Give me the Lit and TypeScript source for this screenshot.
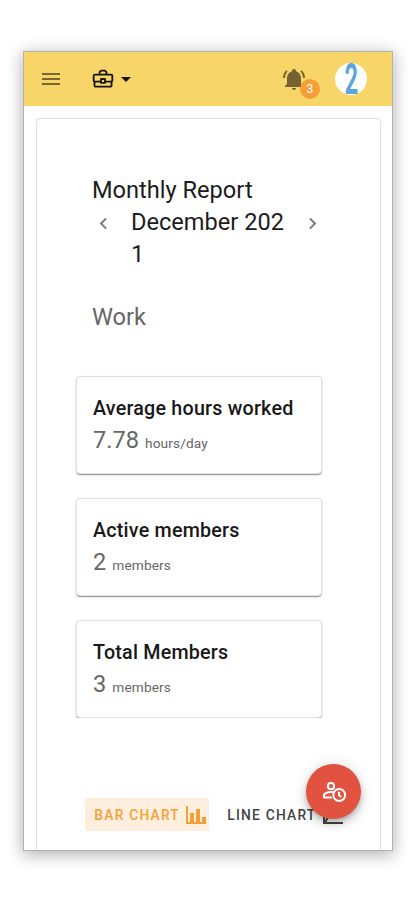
import { LitElement, html, css, svg } from "lit";
import { customElement, property } from "lit/decorators.js";

const PATHS: Record<string, string> = {
  menu: "M3,6H21V8H3V6M3,11H21V13H3V11M3,16H21V18H3V16Z",
  down: "M7,10L12,15L17,10H7Z",
  bell: "M21,19V20H3V19L5,17V11C5,7.9 7.03,5.17 10,4.29C10,4.19 10,4.1 10,4A2,2 0 0,1 12,2A2,2 0 0,1 14,4C14,4.1 14,4.19 14,4.29C16.97,5.17 19,7.9 19,11V17L21,19M14,21A2,2 0 0,1 12,23A2,2 0 0,1 10,21M19.75,3.19L18.33,4.61C20.04,6.3 21,8.6 21,11H23C23,8.07 21.84,5.25 19.75,3.19M1,11H3C3,8.6 3.96,6.3 5.67,4.61L4.25,3.19C2.16,5.25 1,8.07 1,11Z",
  left: "M15.41,16.58L10.83,12L15.41,7.41L14,6L8,12L14,18L15.41,16.58Z",
  right: "M8.59,16.58L13.17,12L8.59,7.41L10,6L16,12L10,18L8.59,16.58Z",
  bars: "M22,21H2V3H4V19H6V10H10V19H12V6H16V19H18V14H22V21Z",
  line: "M16,11.78L20.24,4.45L21.97,5.45L16.74,14.5L10.23,10.75L5.46,19H22V21H2V3H4V17.54L9.5,8L16,11.78Z",
};

@customElement("ui-icon")
export class UiIcon extends LitElement {
  @property() name = "";
  static styles = css`
    :host { display: block; width: 24px; height: 24px; flex: none; }
    svg { display: block; width: 100%; height: 100%; fill: currentColor; }
    .outline { fill: none; stroke: currentColor; stroke-width: 2; stroke-linejoin: round; }
  `;
  render() {
    if (this.name === "briefcase") {
      return html`<svg viewBox="0 0 24 24">${svg`<g class="outline">
        <path d="M8.3 7V4.4L9.9 2.8H14.1L15.7 4.4V7M3.2 7.2H20.8A1.4 1.4 0 0 1 22.2 8.6V13.4A1.4 1.4 0 0 1 20.8 14.8H14.4M9.6 14.8H3.2A1.4 1.4 0 0 1 1.8 13.4V8.6A1.4 1.4 0 0 1 3.2 7.2M2.7 15V19.2A1.2 1.2 0 0 0 3.9 20.4H20.1A1.2 1.2 0 0 0 21.3 19.2V15M9.8 12H14.2V16.2H9.8Z"/>
      </g>`}</svg>`;
    }
    if (this.name === "user-clock") {
      return html`<svg viewBox="0 0 24 24">${svg`<g class="outline">
        <circle cx="9" cy="7.2" r="3.1"/>
        <path d="M11.2 13.1C6 12.4 2 14.4 2 16.6V18.4H9.8"/>
        <circle cx="17.2" cy="16" r="5.9"/>
        <path d="M17 12.8V16.3L19.3 17.8"/>
      </g>`}</svg>`;
    }
    return html`<svg viewBox="0 0 24 24"><path d=${PATHS[this.name] ?? ""} /></svg>`;
  }
}

@customElement("stat-card")
export class StatCard extends LitElement {
  @property() label = "";
  @property() value = "";
  @property() unit = "";
  static styles = css`
    :host {
      display: block; box-sizing: border-box; height: 98px; padding: 16px 16px 0;
      border: 1px solid #e0e0e0; border-radius: 4px; background: #fff;
      box-shadow: 0 2px 1px -1px rgba(0,0,0,.25), 0 1px 1px rgba(0,0,0,.14), 0 1px 3px rgba(0,0,0,.12);
    }
    .label { font-size: 19.7px; line-height: 32px; font-weight: 500; letter-spacing: .22px; color: #181818; white-space: nowrap; }
    .row { display: flex; align-items: baseline; gap: 6px; color: #666; line-height: 31px; }
    .value { font-size: 23.6px; }
    .unit { font-size: 13.7px; letter-spacing: .12px; }
  `;
  render() {
    return html`<div class="label">${this.label}</div>
      <div class="row"><span class="value">${this.value}</span><span class="unit">${this.unit}</span></div>`;
  }
}

@customElement("app-root")
export class AppRoot extends LitElement {
  static styles = css`
    :host {
      display: flow-root; box-sizing: border-box; height: 901px; overflow: hidden;
      background: #fff; font-family: Roboto, sans-serif; color: #1c1c1c;
    }
    .frame {
      position: relative; box-sizing: border-box; width: 370px; height: 800px; margin: 51px 0 0 23px;
      border: 1px solid #b3b3b3; background: #fff;
      box-shadow: 0 3px 15px 1px rgba(0,0,0,.3);
    }
    .screen { height: 100%; overflow: hidden; }
    .bar { display: flex; align-items: center; height: 54px; background: #f8d568; }
    .menu { margin-left: 15px; color: #776832; }
    .case { margin-left: 28.5px; color: #15140c; width: 22px; height: 22px; }
    .drop { color: #15140c; }
    .bell { position: relative; margin-left: auto; color: #746331; }
    .badge {
      position: absolute; left: 18px; top: 12px; width: 20px; height: 20px; border-radius: 50%;
      background: #f4a037; color: #fff; font-size: 12px; line-height: 20px; text-align: center;
    }
    .avatar { width: 32px; height: 32px; border-radius: 50%; background: #fff; margin: 0 24.6px 0 29.5px; flex: none; }
    .avatar svg { display: block; overflow: visible; }
    .avatar text { font: 400 40px Roboto, sans-serif; fill: #5ba5dc; stroke: #5ba5dc; stroke-width: 1.9px; }
    .sheet {
      box-sizing: border-box; margin: 12px 11px 0 12px; height: 760px; border: 1px solid #e0e0e0;
      border-radius: 4px; padding: 55px 58.5px 0 39px; box-shadow: 0 0 1px rgba(0,0,0,.12);
    }
    .head { padding-left: 16px; font-size: 23.6px; line-height: 32px; }
    .month { display: flex; align-items: flex-start; }
    .month ui-icon { width: 23px; height: 23px; margin-top: 5.5px; color: #757575; }
    .date { flex: none; width: 155px; margin: 0 15px 0 16px; word-break: break-all; }
    .work { margin-top: 31px; color: #666; }
    .stats { display: flex; flex-direction: column; gap: 24px; margin-top: 43px; }
    .clip { overflow: hidden; margin: 0 -4px; padding: 0 4px; }
    .tabs { display: flex; gap: 9px; margin: 80px -40px 0 9px; }
    .tab {
      display: flex; align-items: center; justify-content: flex-end; box-sizing: border-box; height: 33px; width: 124px; gap: 4px;
      padding-right: 1px; font-size: 13.8px; font-weight: 500; letter-spacing: 1.22px; color: #444; white-space: nowrap;
    }
    .tab.on { background: #feeedd; color: #f4a037; }
    .tab.wide { width: 127px; padding-right: 0; gap: 4.5px; }
    .fab {
      position: absolute; right: 31px; bottom: 31.5px; width: 55px; height: 55px; border-radius: 50%;
      display: flex; align-items: center; justify-content: center; background: #e15241; color: #fff;
      box-shadow: 0 3px 5px -1px rgba(0,0,0,.2), 0 6px 10px rgba(0,0,0,.14), 0 1px 16px rgba(0,0,0,.12);
    }
  `;
  render() {
    return html`<div class="frame">
      <div class="screen">
        <header class="bar">
          <ui-icon class="menu" name="menu"></ui-icon>
          <ui-icon class="case" name="briefcase"></ui-icon>
          <ui-icon class="drop" name="down"></ui-icon>
          <div class="bell"><ui-icon name="bell"></ui-icon><span class="badge">3</span></div>
          <div class="avatar"><svg width="32" height="32"><text transform="translate(10 30) scale(.56 1)">2</text></svg></div>
        </header>
        <main class="sheet">
          <div class="head">
            <div class="title">Monthly Report</div>
            <div class="month">
              <ui-icon name="left"></ui-icon>
              <div class="date">December 2021</div>
              <ui-icon name="right"></ui-icon>
            </div>
            <div class="work">Work</div>
          </div>
          <div class="clip">
            <div class="stats">
              <stat-card label="Average hours worked" value="7.78" unit="hours/day"></stat-card>
              <stat-card label="Active members" value="2" unit="members"></stat-card>
              <stat-card label="Total Members" value="3" unit="members"></stat-card>
            </div>
          </div>
          <div class="tabs">
            <div class="tab on">BAR CHART<ui-icon name="bars"></ui-icon></div>
            <div class="tab wide">LINE CHART<ui-icon name="line"></ui-icon></div>
          </div>
        </main>
      </div>
      <div class="fab"><ui-icon name="user-clock"></ui-icon></div>
    </div>`;
  }
}
